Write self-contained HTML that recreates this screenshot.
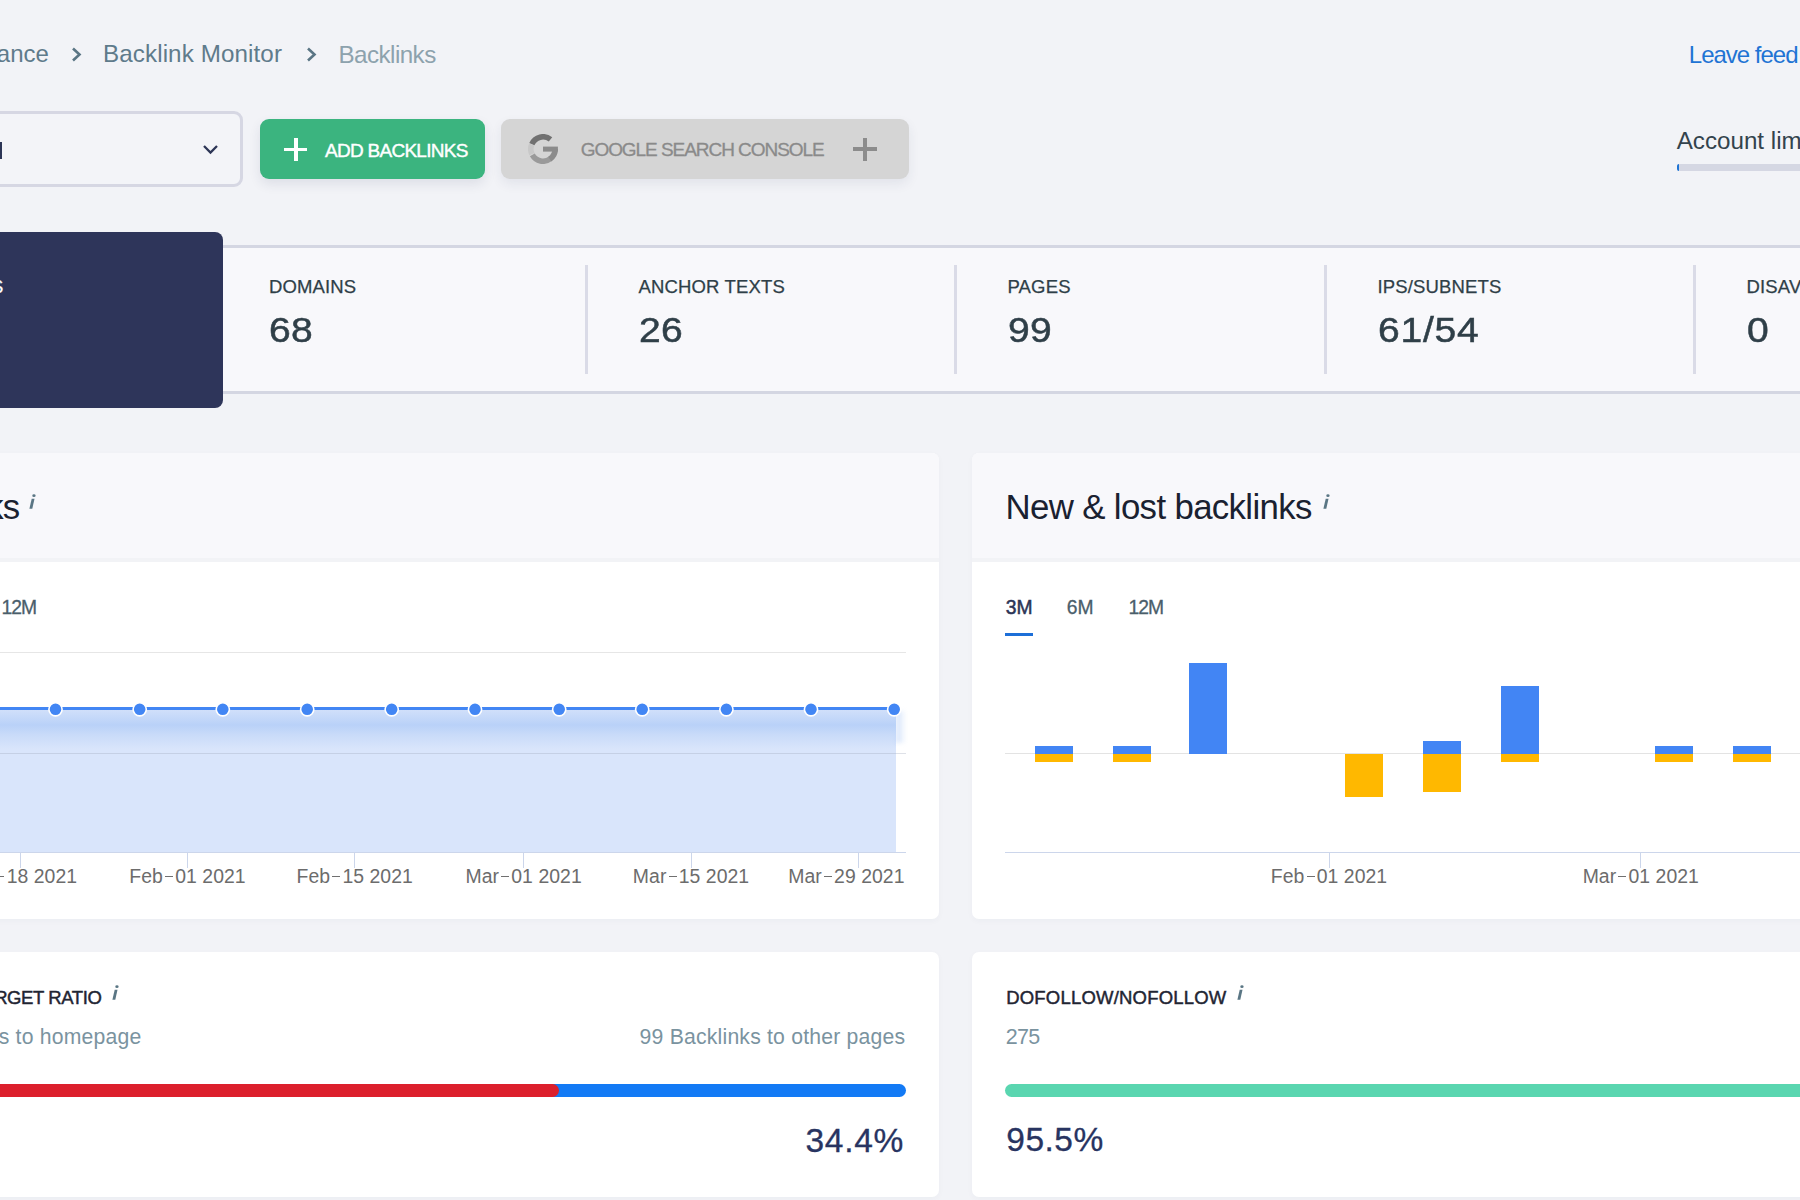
<!DOCTYPE html>
<html><head><meta charset="utf-8"><title>Backlinks</title>
<style>
html,body{margin:0;padding:0;}
body{width:1800px;height:1200px;overflow:hidden;position:relative;background:#f2f3f7;font-family:"Liberation Sans",sans-serif;}
.t{position:absolute;white-space:nowrap;}
.r{position:absolute;}
</style></head><body>
<div class="t" style="top:42.48px;font-size:24px;line-height:24px;color:#5f7b8b;letter-spacing:0.05px;right:1751.00px;">Competitive Research &nbsp; › &nbsp; Performance</div>
<svg class="r" style="left:70px;top:46px" width="14" height="17" viewBox="0 0 14 17"><polyline points="3,2.5 9.5,8.5 3,14.5" fill="none" stroke="#5a7584" stroke-width="2.6"/></svg>
<div class="t" style="top:42.35px;font-size:24.2px;line-height:24.2px;color:#5f7b8b;letter-spacing:0.1px;left:103.00px;">Backlink Monitor</div>
<svg class="r" style="left:305px;top:46px" width="14" height="17" viewBox="0 0 14 17"><polyline points="3,2.5 9.5,8.5 3,14.5" fill="none" stroke="#5a7584" stroke-width="2.6"/></svg>
<div class="t" style="top:42.50px;font-size:24.2px;line-height:24.2px;color:#8da2ad;letter-spacing:-0.55px;left:338.50px;">Backlinks</div>
<div class="t" style="top:42.58px;font-size:24px;line-height:24px;color:#1f74d4;letter-spacing:-1px;left:1688.80px;">Leave feed</div>
<div class="r" style="left:-20.00px;top:111.00px;width:262.60px;height:75.80px;background:#f3f4f8;box-sizing:border-box;border:3.4px solid #d6d7e3;border-radius:9px;"></div>
<div class="r" style="left:0.00px;top:142.00px;width:2.00px;height:16.50px;background:#2c3556;"></div>
<svg class="r" style="left:201px;top:142px" width="18" height="14" viewBox="0 0 18 14"><polyline points="3,4 9.5,10.5 16,4" fill="none" stroke="#2c3556" stroke-width="2.3"/></svg>
<div class="r" style="left:259.70px;top:119.30px;width:224.90px;height:59.40px;background:#3bb47f;border-radius:9px;box-shadow:0 5px 12px rgba(40,50,90,0.10);"></div>
<div class="r" style="left:294.00px;top:137.60px;width:3.50px;height:23.40px;background:#fff;"></div>
<div class="r" style="left:284.00px;top:147.60px;width:23.40px;height:3.50px;background:#fff;"></div>
<div class="t" style="top:141.46px;font-size:19px;line-height:19px;color:#fff;letter-spacing:-0.72px;left:325.00px;-webkit-text-stroke:0.4px #fff;">ADD BACKLINKS</div>
<div class="r" style="left:501.40px;top:119.40px;width:407.30px;height:59.20px;background:#d5d5d5;border-radius:9px;box-shadow:0 5px 12px rgba(40,50,90,0.08);"></div>
<svg class="r" style="left:528px;top:134px" width="30" height="30" viewBox="0 0 30 30" fill="none" stroke-width="5.6">
<path d="M22.51 5.39 A12.2 12.2 0 0 0 3.85 10.04" stroke="#717171"/>
<path d="M3.69 10.43 A12.2 12.2 0 0 0 3.94 20.16" stroke="#c8c8c8"/>
<path d="M4.33 20.91 A12.2 12.2 0 0 0 22.51 24.61" stroke="#9a9a9a"/>
<path d="M21.82 25.11 A12.2 12.2 0 0 0 27.20 15.00" stroke="#8b8b8b"/>
<rect x="15" y="12.6" width="14.9" height="5" fill="#8b8b8b" stroke="none"/>
</svg>
<div class="t" style="top:139.56px;font-size:19px;line-height:19px;color:#8a8a8a;letter-spacing:-1.05px;left:580.70px;-webkit-text-stroke:0.3px #8a8a8a;">GOOGLE SEARCH CONSOLE</div>
<div class="r" style="left:863.30px;top:137.60px;width:3.50px;height:23.00px;background:#8c8c8c;"></div>
<div class="r" style="left:853.30px;top:147.30px;width:23.50px;height:3.50px;background:#8c8c8c;"></div>
<div class="t" style="top:128.85px;font-size:24.2px;line-height:24.2px;color:#33434d;left:1676.70px;">Account limits</div>
<div class="r" style="left:1676.70px;top:164.30px;width:153.30px;height:7.20px;background:#d5d7e3;border-radius:4px;"></div>
<div class="r" style="left:1676.70px;top:164.30px;width:2.80px;height:7.20px;background:#1f74d4;border-radius:4px 0 0 4px;"></div>
<div class="r" style="left:-10.00px;top:245.00px;width:1840.00px;height:149.30px;background:#f8f8fb;box-sizing:border-box;border-top:3.3px solid #d4d6e2;border-bottom:3.3px solid #d4d6e2;"></div>
<div class="r" style="left:-20.00px;top:232.00px;width:243.00px;height:175.60px;background:#2e355a;border-radius:8px;"></div>
<div class="t" style="top:278.13px;font-size:18.5px;line-height:18.5px;color:#fff;letter-spacing:0.2px;right:1796.40px;-webkit-text-stroke:0.25px #fff;">BACKLINKS</div>
<div class="r" style="left:584.50px;top:265.30px;width:3.00px;height:108.90px;background:#dadbe7;"></div>
<div class="r" style="left:954.00px;top:265.30px;width:3.00px;height:108.90px;background:#dadbe7;"></div>
<div class="r" style="left:1323.50px;top:265.30px;width:3.00px;height:108.90px;background:#dadbe7;"></div>
<div class="r" style="left:1693.00px;top:265.30px;width:3.00px;height:108.90px;background:#dadbe7;"></div>
<div class="t" style="top:278.33px;font-size:18.5px;line-height:18.5px;color:#2f3f48;letter-spacing:0.15px;left:268.90px;-webkit-text-stroke:0.25px #2f3f48;">DOMAINS</div>
<div class="t" style="top:313.10px;font-size:35.5px;line-height:35.5px;color:#2f3f48;letter-spacing:0.2px;left:269.20px;-webkit-text-stroke:0.5px #2f3f48;transform:scaleX(1.1);transform-origin:0 0;">68</div>
<div class="t" style="top:278.33px;font-size:18.5px;line-height:18.5px;color:#2f3f48;letter-spacing:0.15px;left:638.50px;-webkit-text-stroke:0.25px #2f3f48;">ANCHOR TEXTS</div>
<div class="t" style="top:313.10px;font-size:35.5px;line-height:35.5px;color:#2f3f48;letter-spacing:0.2px;left:638.80px;-webkit-text-stroke:0.5px #2f3f48;transform:scaleX(1.1);transform-origin:0 0;">26</div>
<div class="t" style="top:278.33px;font-size:18.5px;line-height:18.5px;color:#2f3f48;letter-spacing:0.15px;left:1007.50px;-webkit-text-stroke:0.25px #2f3f48;">PAGES</div>
<div class="t" style="top:313.10px;font-size:35.5px;line-height:35.5px;color:#2f3f48;letter-spacing:0.2px;left:1007.80px;-webkit-text-stroke:0.5px #2f3f48;transform:scaleX(1.1);transform-origin:0 0;">99</div>
<div class="t" style="top:278.33px;font-size:18.5px;line-height:18.5px;color:#2f3f48;letter-spacing:0.15px;left:1377.50px;-webkit-text-stroke:0.25px #2f3f48;">IPS/SUBNETS</div>
<div class="t" style="top:313.10px;font-size:35.5px;line-height:35.5px;color:#2f3f48;letter-spacing:0.7px;left:1377.80px;-webkit-text-stroke:0.5px #2f3f48;transform:scaleX(1.1);transform-origin:0 0;">61/54</div>
<div class="t" style="top:278.33px;font-size:18.5px;line-height:18.5px;color:#2f3f48;letter-spacing:0.15px;left:1746.50px;-webkit-text-stroke:0.25px #2f3f48;">DISAVOWED</div>
<div class="t" style="top:313.10px;font-size:35.5px;line-height:35.5px;color:#2f3f48;letter-spacing:0.2px;left:1746.80px;-webkit-text-stroke:0.5px #2f3f48;transform:scaleX(1.1);transform-origin:0 0;">0</div>
<div class="r" style="left:-20.00px;top:452.50px;width:959.00px;height:466.10px;background:#ffffff;border-radius:7px;overflow:hidden;box-shadow:0 2px 6px rgba(40,50,90,0.03);"></div>
<div class="r" style="left:-20.00px;top:452.50px;width:959.00px;height:105.50px;background:#f8f8fb;border-radius:7px 7px 0 0;"></div>
<div class="r" style="left:-20.00px;top:558.00px;width:959.00px;height:3.50px;background:#f2f3f6;"></div>
<div class="r" style="left:972.00px;top:452.50px;width:858.00px;height:466.10px;background:#ffffff;border-radius:7px;overflow:hidden;box-shadow:0 2px 6px rgba(40,50,90,0.03);"></div>
<div class="r" style="left:972.00px;top:452.50px;width:858.00px;height:105.50px;background:#f8f8fb;border-radius:7px 7px 0 0;"></div>
<div class="r" style="left:972.00px;top:558.00px;width:858.00px;height:3.50px;background:#f2f3f6;"></div>
<div class="r" style="left:-20.00px;top:951.70px;width:959.00px;height:245.00px;background:#ffffff;border-radius:7px;overflow:hidden;box-shadow:0 2px 6px rgba(40,50,90,0.03);"></div>
<div class="r" style="left:972.00px;top:951.60px;width:858.00px;height:245.10px;background:#ffffff;border-radius:7px;overflow:hidden;box-shadow:0 2px 6px rgba(40,50,90,0.03);"></div>
<div class="t" style="top:489.61px;font-size:34.8px;line-height:34.8px;color:#1a2130;letter-spacing:-0.74px;right:1780.50px;">Backlinks</div>
<div class="t" style="top:489.61px;font-size:34.8px;line-height:34.8px;color:#1a2130;letter-spacing:-0.64px;left:1005.50px;">New &amp; lost backlinks</div>
<svg class="r" style="left:29.4px;top:494px" width="8" height="16" viewBox="0 0 8 16"><ellipse cx="4.95" cy="1.65" rx="1.65" ry="1.35" fill="#5a7684"/><polygon points="2.7,4.8 5.5,4.8 3.3,14.7 0.4,14.7" fill="#5a7684"/></svg>
<svg class="r" style="left:1323px;top:494px" width="8" height="16" viewBox="0 0 8 16"><ellipse cx="4.95" cy="1.65" rx="1.65" ry="1.35" fill="#5a7684"/><polygon points="2.7,4.8 5.5,4.8 3.3,14.7 0.4,14.7" fill="#5a7684"/></svg>
<svg class="r" style="left:111.6px;top:984.6px" width="8" height="16" viewBox="0 0 8 16"><ellipse cx="4.95" cy="1.65" rx="1.65" ry="1.35" fill="#5a7684"/><polygon points="2.7,4.8 5.5,4.8 3.3,14.7 0.4,14.7" fill="#5a7684"/></svg>
<svg class="r" style="left:1236.5px;top:984.6px" width="8" height="16" viewBox="0 0 8 16"><ellipse cx="4.95" cy="1.65" rx="1.65" ry="1.35" fill="#5a7684"/><polygon points="2.7,4.8 5.5,4.8 3.3,14.7 0.4,14.7" fill="#5a7684"/></svg>
<div class="t" style="top:597.81px;font-size:19.3px;line-height:19.3px;color:#4a5e6b;letter-spacing:-1px;left:1.50px;-webkit-text-stroke:0.3px #4a5e6b;">12M</div>
<div class="t" style="top:597.61px;font-size:19.3px;line-height:19.3px;color:#2c3556;left:1005.80px;-webkit-text-stroke:0.5px #2c3556;">3M</div>
<div class="t" style="top:597.61px;font-size:19.3px;line-height:19.3px;color:#4a5e6b;left:1066.80px;-webkit-text-stroke:0.3px #4a5e6b;">6M</div>
<div class="t" style="top:597.61px;font-size:19.3px;line-height:19.3px;color:#4a5e6b;letter-spacing:-1px;left:1128.50px;-webkit-text-stroke:0.3px #4a5e6b;">12M</div>
<div class="r" style="left:1005.00px;top:633.20px;width:28.30px;height:3.00px;background:#1d6fd8;"></div>
<div class="r" style="left:-10.00px;top:651.50px;width:915.50px;height:1.50px;background:#e6e6e6;"></div>
<div class="r" style="left:-10px;top:709px;width:905.8px;height:143.5px;background:linear-gradient(to bottom,#d2e0fa 0px,#c6d9f9 8px,#b9d1f8 16px,#c9dbf9 26px,#d9e5fb 40px,#d9e5fb 100%);"></div>
<div class="r" style="left:895.8px;top:711px;width:10px;height:32px;background:linear-gradient(to right,rgba(190,212,248,0.7),rgba(255,255,255,0));filter:blur(2px);"></div>
<div class="r" style="left:-10.00px;top:752.50px;width:915.50px;height:1.50px;background:rgba(160,170,190,0.35);"></div>
<div class="r" style="left:-10.00px;top:852.00px;width:915.50px;height:1.20px;background:#ccd6eb;"></div>
<div class="r" style="left:-10.00px;top:707.00px;width:904.20px;height:3.00px;background:#4286f4;"></div>
<svg class="r" style="left:0;top:690px" width="920" height="40"><circle cx="55.5" cy="19.3" r="6.6" fill="#4286f4" stroke="#fff" stroke-width="1.6"/><circle cx="139.7" cy="19.3" r="6.6" fill="#4286f4" stroke="#fff" stroke-width="1.6"/><circle cx="222.8" cy="19.3" r="6.6" fill="#4286f4" stroke="#fff" stroke-width="1.6"/><circle cx="307.2" cy="19.3" r="6.6" fill="#4286f4" stroke="#fff" stroke-width="1.6"/><circle cx="391.7" cy="19.3" r="6.6" fill="#4286f4" stroke="#fff" stroke-width="1.6"/><circle cx="475" cy="19.3" r="6.6" fill="#4286f4" stroke="#fff" stroke-width="1.6"/><circle cx="559.2" cy="19.3" r="6.6" fill="#4286f4" stroke="#fff" stroke-width="1.6"/><circle cx="642.2" cy="19.3" r="6.6" fill="#4286f4" stroke="#fff" stroke-width="1.6"/><circle cx="726.4" cy="19.3" r="6.6" fill="#4286f4" stroke="#fff" stroke-width="1.6"/><circle cx="811" cy="19.3" r="6.6" fill="#4286f4" stroke="#fff" stroke-width="1.6"/><circle cx="894.2" cy="19.3" r="6.6" fill="#4286f4" stroke="#fff" stroke-width="1.6"/></svg>
<div class="r" style="left:19.50px;top:852.00px;width:1.20px;height:16.00px;background:#ccd6eb;"></div>
<div class="t" style="top:867.29px;font-size:19.4px;line-height:19.4px;color:#6c6c6c;letter-spacing:0.05px;left:20.00px;transform:translateX(-50%);">Jan<span style="display:inline-block;width:12.3px;height:1.4px;vertical-align:6.4px;background:linear-gradient(to right,transparent 2.3px,#707070 2.3px,#707070 9.9px,transparent 9.9px)"></span>18 2021</div>
<div class="r" style="left:187.00px;top:852.00px;width:1.20px;height:16.00px;background:#ccd6eb;"></div>
<div class="t" style="top:867.29px;font-size:19.4px;line-height:19.4px;color:#6c6c6c;letter-spacing:0.05px;left:187.50px;transform:translateX(-50%);">Feb<span style="display:inline-block;width:12.3px;height:1.4px;vertical-align:6.4px;background:linear-gradient(to right,transparent 2.3px,#707070 2.3px,#707070 9.9px,transparent 9.9px)"></span>01 2021</div>
<div class="r" style="left:354.20px;top:852.00px;width:1.20px;height:16.00px;background:#ccd6eb;"></div>
<div class="t" style="top:867.29px;font-size:19.4px;line-height:19.4px;color:#6c6c6c;letter-spacing:0.05px;left:354.70px;transform:translateX(-50%);">Feb<span style="display:inline-block;width:12.3px;height:1.4px;vertical-align:6.4px;background:linear-gradient(to right,transparent 2.3px,#707070 2.3px,#707070 9.9px,transparent 9.9px)"></span>15 2021</div>
<div class="r" style="left:523.10px;top:852.00px;width:1.20px;height:16.00px;background:#ccd6eb;"></div>
<div class="t" style="top:867.29px;font-size:19.4px;line-height:19.4px;color:#6c6c6c;letter-spacing:0.05px;left:523.60px;transform:translateX(-50%);">Mar<span style="display:inline-block;width:12.3px;height:1.4px;vertical-align:6.4px;background:linear-gradient(to right,transparent 2.3px,#707070 2.3px,#707070 9.9px,transparent 9.9px)"></span>01 2021</div>
<div class="r" style="left:690.50px;top:852.00px;width:1.20px;height:16.00px;background:#ccd6eb;"></div>
<div class="t" style="top:867.29px;font-size:19.4px;line-height:19.4px;color:#6c6c6c;letter-spacing:0.05px;left:691.00px;transform:translateX(-50%);">Mar<span style="display:inline-block;width:12.3px;height:1.4px;vertical-align:6.4px;background:linear-gradient(to right,transparent 2.3px,#707070 2.3px,#707070 9.9px,transparent 9.9px)"></span>15 2021</div>
<div class="r" style="left:857.80px;top:852.00px;width:1.20px;height:16.00px;background:#ccd6eb;"></div>
<div class="t" style="top:867.29px;font-size:19.4px;line-height:19.4px;color:#6c6c6c;letter-spacing:0.05px;right:895.50px;">Mar<span style="display:inline-block;width:12.3px;height:1.4px;vertical-align:6.4px;background:linear-gradient(to right,transparent 2.3px,#707070 2.3px,#707070 9.9px,transparent 9.9px)"></span>29 2021</div>
<div class="r" style="left:1005.30px;top:752.50px;width:824.70px;height:1.50px;background:#e3e3e3;"></div>
<div class="r" style="left:1005.00px;top:852.00px;width:825.00px;height:1.20px;background:#ccd6eb;"></div>
<div class="r" style="left:1328.50px;top:852.00px;width:1.20px;height:16.00px;background:#ccd6eb;"></div>
<div class="t" style="top:867.29px;font-size:19.4px;line-height:19.4px;color:#6c6c6c;letter-spacing:0.05px;left:1329.00px;transform:translateX(-50%);">Feb<span style="display:inline-block;width:12.3px;height:1.4px;vertical-align:6.4px;background:linear-gradient(to right,transparent 2.3px,#707070 2.3px,#707070 9.9px,transparent 9.9px)"></span>01 2021</div>
<div class="r" style="left:1640.30px;top:852.00px;width:1.20px;height:16.00px;background:#ccd6eb;"></div>
<div class="t" style="top:867.29px;font-size:19.4px;line-height:19.4px;color:#6c6c6c;letter-spacing:0.05px;left:1640.80px;transform:translateX(-50%);">Mar<span style="display:inline-block;width:12.3px;height:1.4px;vertical-align:6.4px;background:linear-gradient(to right,transparent 2.3px,#707070 2.3px,#707070 9.9px,transparent 9.9px)"></span>01 2021</div>
<div class="r" style="left:1035.00px;top:746.00px;width:38.00px;height:8.00px;background:#4285f4;"></div>
<div class="r" style="left:1035.00px;top:754.00px;width:38.00px;height:8.00px;background:#ffb800;"></div>
<div class="r" style="left:1113.00px;top:746.00px;width:38.00px;height:8.00px;background:#4285f4;"></div>
<div class="r" style="left:1113.00px;top:754.00px;width:38.00px;height:8.00px;background:#ffb800;"></div>
<div class="r" style="left:1189.00px;top:663.00px;width:38.00px;height:91.00px;background:#4285f4;"></div>
<div class="r" style="left:1345.00px;top:754.00px;width:38.00px;height:43.00px;background:#ffb800;"></div>
<div class="r" style="left:1423.00px;top:741.00px;width:38.00px;height:13.00px;background:#4285f4;"></div>
<div class="r" style="left:1423.00px;top:754.00px;width:38.00px;height:38.00px;background:#ffb800;"></div>
<div class="r" style="left:1501.00px;top:686.00px;width:38.00px;height:68.00px;background:#4285f4;"></div>
<div class="r" style="left:1501.00px;top:754.00px;width:38.00px;height:8.00px;background:#ffb800;"></div>
<div class="r" style="left:1655.00px;top:746.00px;width:38.00px;height:8.00px;background:#4285f4;"></div>
<div class="r" style="left:1655.00px;top:754.00px;width:38.00px;height:8.00px;background:#ffb800;"></div>
<div class="r" style="left:1733.00px;top:746.00px;width:38.00px;height:8.00px;background:#4285f4;"></div>
<div class="r" style="left:1733.00px;top:754.00px;width:38.00px;height:8.00px;background:#ffb800;"></div>
<div class="t" style="top:988.53px;font-size:18.5px;line-height:18.5px;color:#1f2533;letter-spacing:-0.4px;right:1698.50px;-webkit-text-stroke:0.45px #1f2533;">HOMEPAGE/TARGET RATIO</div>
<div class="t" style="top:1026.41px;font-size:21.2px;line-height:21.2px;color:#7a939f;letter-spacing:0.2px;right:1658.50px;">176 Backlinks to homepage</div>
<div class="t" style="top:1026.41px;font-size:21.2px;line-height:21.2px;color:#7a939f;letter-spacing:0.2px;right:894.70px;">99 Backlinks to other pages</div>
<div class="r" style="left:-20.00px;top:1083.80px;width:925.60px;height:13.20px;background:#137af5;border-radius:7px;"></div>
<div class="r" style="left:-20.00px;top:1083.80px;width:578.50px;height:13.20px;background:#dc1f2c;border-radius:7px;"></div>
<div class="t" style="top:1123.51px;font-size:33.5px;line-height:33.5px;color:#283461;letter-spacing:0.7px;right:896.00px;-webkit-text-stroke:0.3px #283461;">34.4%</div>
<div class="t" style="top:988.63px;font-size:18.5px;line-height:18.5px;color:#1f2533;letter-spacing:0.2px;left:1006.20px;-webkit-text-stroke:0.45px #1f2533;">DOFOLLOW/NOFOLLOW</div>
<div class="t" style="top:1026.67px;font-size:21.5px;line-height:21.5px;color:#7a939f;letter-spacing:-0.7px;left:1005.70px;">275</div>
<div class="r" style="left:1005.00px;top:1084.10px;width:825.00px;height:12.80px;background:#5ad6b0;border-radius:7px;"></div>
<div class="t" style="top:1123.31px;font-size:33.5px;line-height:33.5px;color:#283461;letter-spacing:0.5px;left:1006.30px;-webkit-text-stroke:0.3px #283461;">95.5%</div>
</body></html>
